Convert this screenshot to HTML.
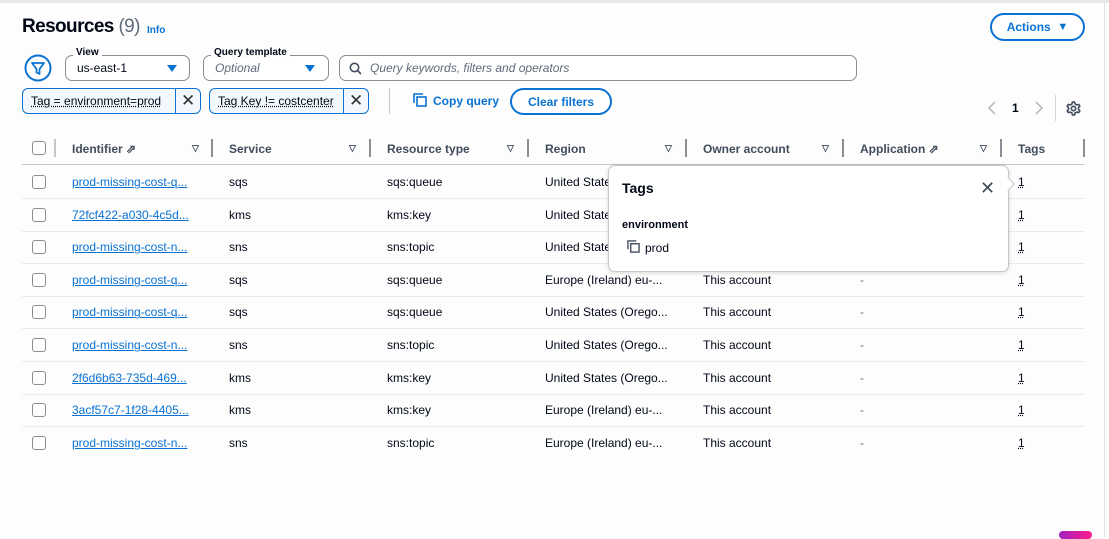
<!DOCTYPE html>
<html><head><style>
*{box-sizing:border-box;margin:0;padding:0}
body{width:1109px;height:537px;background:#fdfdfd;font-family:"Liberation Sans",sans-serif;color:#000716;position:relative;overflow:hidden;font-size:12px}
.abs{position:absolute}
.topline{left:0;top:0;width:1109px;height:3px;background:#e9e9e9}
.rb{left:1104px;top:0;width:1px;height:537px;background:#e4e4e4}
h1{position:absolute;left:22px;top:16px;font-size:19px;font-weight:bold;letter-spacing:-0.6px}
h1 span{font-weight:normal;color:#5f6b7a}
.info{left:147px;top:25px;color:#0972d3;font-weight:bold;font-size:10px}
.btn{border:2px solid #0972d3;border-radius:16px;color:#0972d3;font-weight:bold;display:flex;align-items:center;justify-content:center;background:#fff}
.sel{border:1px solid #8c8c94;border-radius:7px;background:#fff;height:26px;padding-left:11px;display:flex;align-items:center;font-size:12px}
.lbl{font-size:10px;font-weight:bold;background:#fdfdfd;padding:0 3px}
.tri{width:0;height:0;border-left:5px solid transparent;border-right:5px solid transparent;border-top:7px solid #0972d3;position:absolute}
.tok{border:1px solid #0972d3;border-radius:6px;background:#f2f8fd;height:26px;display:flex;align-items:center;font-size:12px}
.tok .t{padding:0 8px;border-right:1px solid #0972d3;height:100%;display:flex;align-items:center}
.tok .t u{text-decoration:underline dotted}
.tok .x{width:24px;text-align:center;font-size:17px;color:#333}
.th{top:142px;font-weight:bold;color:#414d5c;font-size:12px}
.div{top:139px;width:2px;height:18px;background:#8c8c94}
.ht{top:143px;font-size:9px;color:#414d5c;font-weight:bold}
.cb{width:14px;height:14px;border:1px solid #8c8c94;border-radius:3px;background:#fff}
.row{left:22px;width:1062px;height:1px;background:#e9ebed}
.c{font-size:12px;color:#000716;white-space:nowrap}
.lnk{color:#0972d3;text-decoration:underline;text-decoration-thickness:1px}
.tg{text-decoration:underline dotted}
</style></head><body>
<div class="abs topline"></div>
<div class="abs rb"></div>
<h1>Resources <span>(9)</span></h1>
<div class="abs info">Info</div>
<div class="abs btn" style="left:990px;top:13px;width:95px;height:28px;font-size:12px">Actions&nbsp;&nbsp;<span style="font-size:11px">▼</span></div>

<svg class="abs" style="left:24px;top:54px" width="28" height="28" viewBox="0 0 28 28"><circle cx="14" cy="14" r="12.5" fill="#fff" stroke="#0972d3" stroke-width="2"/><path d="M8 9h12l-4.5 6v5l-3 -1.5v-3.5z" fill="none" stroke="#0972d3" stroke-width="1.8" stroke-linejoin="round"/></svg>

<div class="abs sel" style="left:65px;top:55px;width:125px">us-east-1</div>
<div class="abs lbl" style="left:73px;top:47px">View</div>
<div class="tri" style="left:167px;top:65px"></div>
<div class="abs sel" style="left:203px;top:55px;width:126px;color:#5f6b7a;font-style:italic">Optional</div>
<div class="abs lbl" style="left:211px;top:47px">Query template</div>
<div class="tri" style="left:305px;top:65px"></div>
<div class="abs sel" style="left:339px;top:55px;width:518px;color:#5f6b7a;font-style:italic;padding-left:30px">Query keywords, filters and operators</div>
<svg class="abs" style="left:349px;top:62px" width="13" height="13" viewBox="0 0 13 13"><circle cx="5.5" cy="5.5" r="4.2" fill="none" stroke="#414d5c" stroke-width="1.6"/><path d="M8.5 8.5l3.5 3.5" stroke="#414d5c" stroke-width="1.6"/></svg>

<div class="abs tok" style="left:22px;top:88px;width:179px"><div class="t" style="width:155px"><u>Tag = environment=prod</u></div><div class="x">✕</div></div>
<div class="abs tok" style="left:209px;top:88px;width:160px"><div class="t" style="width:136px"><u>Tag Key != costcenter</u></div><div class="x">✕</div></div>
<div class="abs" style="left:389px;top:88px;width:1px;height:26px;background:#c6c6cd"></div>
<svg class="abs" style="left:413px;top:93px" width="14" height="14" viewBox="0 0 14 14"><path d="M1 10V1h9" fill="none" stroke="#0972d3" stroke-width="1.6"/><rect x="4" y="4" width="9" height="9" fill="none" stroke="#0972d3" stroke-width="1.6"/></svg>
<div class="abs" style="left:433px;top:94px;color:#0972d3;font-weight:bold;font-size:12px">Copy query</div>
<div class="abs btn" style="left:510px;top:88px;width:102px;height:27px;font-size:12px">Clear filters</div>

<svg class="abs" style="left:987px;top:101px" width="10" height="14" viewBox="0 0 10 14"><path d="M8 1L2 7l6 6" fill="none" stroke="#b4b4bb" stroke-width="1.5"/></svg>
<div class="abs" style="left:1012px;top:101px;font-weight:bold;font-size:12px">1</div>
<svg class="abs" style="left:1034px;top:101px" width="10" height="14" viewBox="0 0 10 14"><path d="M2 1l6 6-6 6" fill="none" stroke="#b4b4bb" stroke-width="1.5"/></svg>
<div class="abs" style="left:1055px;top:95px;width:1px;height:26px;background:#d1d5db"></div>
<svg class="abs" style="left:1066px;top:101px" width="15" height="15" viewBox="0 0 14 14"><circle cx="7" cy="7" r="2" fill="none" stroke="#414d5c" stroke-width="1.5"/><path d="M6 1h2l.5 1.8 1.6.9 1.8-.5 1 1.7-1.3 1.3v1.6l1.3 1.3-1 1.7-1.8-.5-1.6.9L8 13H6l-.5-1.8-1.6-.9-1.8.5-1-1.7 1.3-1.3V6.2L1.1 4.9l1-1.7 1.8.5 1.6-.9z" fill="none" stroke="#414d5c" stroke-width="1.5" stroke-linejoin="round"/></svg>

<div class="abs cb" style="left:32px;top:141px"></div>
<div class="abs" style="left:54px;top:139px;width:2px;height:18px;background:#c6c6cd"></div>
<div class="abs th" style="left:72px">Identifier ⇗</div><div class="abs ht" style="left:192px">▽</div><div class="abs div" style="left:211px"></div>
<div class="abs th" style="left:229px">Service</div><div class="abs ht" style="left:349px">▽</div><div class="abs div" style="left:369px"></div>
<div class="abs th" style="left:387px">Resource type</div><div class="abs ht" style="left:507px">▽</div><div class="abs div" style="left:527px"></div>
<div class="abs th" style="left:545px">Region</div><div class="abs ht" style="left:665px">▽</div><div class="abs div" style="left:685px"></div>
<div class="abs th" style="left:703px">Owner account</div><div class="abs ht" style="left:822px">▽</div><div class="abs div" style="left:842px"></div>
<div class="abs th" style="left:860px">Application ⇗</div><div class="abs ht" style="left:980px">▽</div><div class="abs div" style="left:1000px"></div>
<div class="abs th" style="left:1018px">Tags</div><div class="abs div" style="left:1083px"></div>
<div class="abs row" style="top:164px;background:#c6c6cd"></div>

<div id="rows"></div>
<script>
var d=[["prod-missing-cost-q...","sqs","sqs:queue","United States (Orego..."],["72fcf422-a030-4c5d...","kms","kms:key","United States (Orego..."],["prod-missing-cost-n...","sns","sns:topic","United States (Orego..."],["prod-missing-cost-q...","sqs","sqs:queue","Europe (Ireland) eu-..."],["prod-missing-cost-q...","sqs","sqs:queue","United States (Orego..."],["prod-missing-cost-n...","sns","sns:topic","United States (Orego..."],["2f6d6b63-735d-469...","kms","kms:key","United States (Orego..."],["3acf57c7-1f28-4405...","kms","kms:key","Europe (Ireland) eu-..."],["prod-missing-cost-n...","sns","sns:topic","Europe (Ireland) eu-..."]];
var h="";
for(var i=0;i<9;i++){var y=175+i*32.6;
h+='<div class="abs cb" style="left:32px;top:'+(y)+'px"></div>';
h+='<div class="abs c lnk" style="left:72px;top:'+y+'px">'+d[i][0]+'</div>';
h+='<div class="abs c" style="left:229px;top:'+y+'px">'+d[i][1]+'</div>';
h+='<div class="abs c" style="left:387px;top:'+y+'px">'+d[i][2]+'</div>';
h+='<div class="abs c" style="left:545px;top:'+y+'px">'+d[i][3]+'</div>';
h+='<div class="abs c" style="left:703px;top:'+y+'px">This account</div>';
h+='<div class="abs c" style="left:860px;top:'+y+'px;color:#5f6b7a">-</div>';
h+='<div class="abs c tg" style="left:1018px;top:'+y+'px">1</div>';
if(i<8)h+='<div class="abs row" style="top:'+(y+23)+'px"></div>';}
document.getElementById("rows").innerHTML=h;
</script>

<div class="abs" style="left:608px;top:165px;width:401px;height:107px;background:#fff;border:1px solid #c6c6cd;border-radius:7px;box-shadow:0 1px 4px rgba(0,0,0,.15)"></div>
<div class="abs" style="left:1003px;top:179px;width:10px;height:10px;background:#fff;border-top:1px solid #c6c6cd;border-right:1px solid #c6c6cd;transform:rotate(45deg)"></div>
<div class="abs" style="left:622px;top:180px;font-weight:bold;font-size:14px">Tags</div>
<div class="abs" style="left:980px;top:178px;font-size:18px;color:#414d5c">✕</div>
<div class="abs" style="left:622px;top:219px;font-weight:bold;font-size:11px">environment</div>
<svg class="abs" style="left:627px;top:240px" width="13" height="13" viewBox="0 0 14 14"><path d="M1 10V1h9" fill="none" stroke="#414d5c" stroke-width="1.5"/><rect x="4" y="4" width="9" height="9" fill="none" stroke="#414d5c" stroke-width="1.5"/></svg>
<div class="abs" style="left:645px;top:241px;font-size:12px">prod</div>

<div class="abs" style="left:1059px;top:531px;width:33px;height:8px;border-radius:4px;background:linear-gradient(90deg,#a020c0,#ff1a8c)"></div>
</body></html>
